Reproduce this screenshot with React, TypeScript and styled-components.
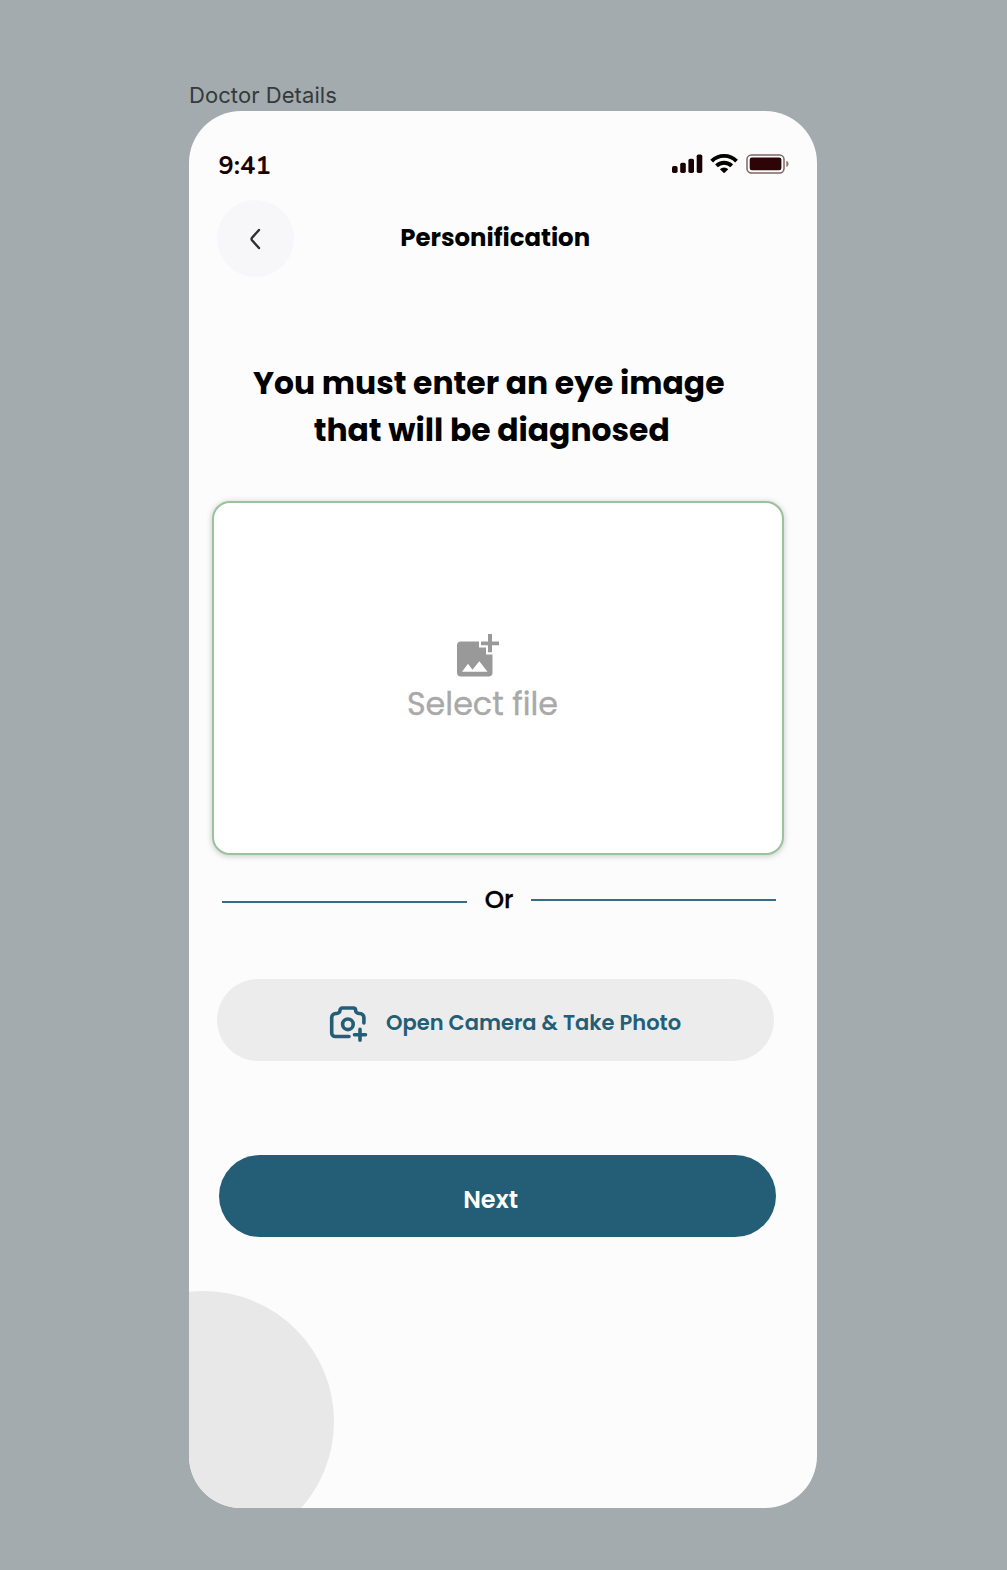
import React from "react";
import styled, { createGlobalStyle } from "styled-components";

const GlobalStyle = createGlobalStyle`
  *, *::before, *::after { box-sizing: border-box; }
  body { margin: 0; background: #a3abae; }
  button { border: 0; padding: 0; margin: 0; font: inherit; cursor: pointer; }
  h1, h2, p { margin: 0; }
`;

const Canvas = styled.main`
  width: 1007px;
  height: 1570px;
  padding: 81px 0 0 189px;
  overflow: hidden;
  background: #a3abae;
  font-family: Poppins, Inter, "Liberation Sans", sans-serif;
`;

const FrameLabel = styled.p`
  height: 30.4px;
  font: 400 22px/28px Inter, sans-serif;
  letter-spacing: 0.07px;
  color: #34393b;
`;

const Phone = styled.section`
  position: relative;
  display: flex;
  flex-direction: column;
  width: 628.4px;
  height: 1396.4px;
  border-radius: 52px;
  overflow: hidden;
  background: #fcfcfc;
`;

const StatusBar = styled.div`
  display: flex;
  justify-content: space-between;
  align-items: center;
  height: 30px;
  margin: 38.6px 27px 0 29.5px;
`;

const Time = styled.span`
  padding-top: 2px;
  font: 700 25.5px/30px Nunito, Lato, sans-serif;
  color: #1a0202;
`;

const StatusIcons = styled.svg`
  display: block;
  width: 118px;
  height: 22px;
  margin-top: -2px;
`;

const Header = styled.header`
  display: grid;
  grid-template-columns: 77px 1fr 77px;
  align-items: center;
  height: 77px;
  margin: 20.5px 44px 0 28px;
`;

const BackButton = styled.button`
  display: grid;
  place-items: center;
  width: 77px;
  height: 77px;
  padding-right: 2px;
  border-radius: 50%;
  background: #f7f7f9;
`;

const Title = styled.h1`
  justify-self: center;
  padding-bottom: 2px;
  font-size: 24.4px;
  line-height: 36px;
  font-weight: 700;
  white-space: nowrap;
  color: #000;
`;

const Prompt = styled.h2`
  display: flex;
  flex-direction: column;
  align-items: center;
  margin-top: 82.5px;
  padding-right: 29px;
  font-size: 31.4px;
  line-height: 47px;
  font-weight: 700;
  color: #000;
`;

const PromptLine = styled.span<{ $indent?: number }>`
  white-space: nowrap;
  padding-left: ${(p) => p.$indent ?? 0}px;
`;

const DropZone = styled.button`
  display: flex;
  flex-direction: column;
  align-items: center;
  width: 572px;
  height: 354px;
  margin: 47.4px 0 0 23px;
  padding: 130.5px 31px 0 0;
  border: 2px solid #9cc29c;
  border-radius: 18px;
  background: #fff;
  box-shadow: 0 1px 6px rgba(0, 0, 0, 0.22);
`;

const ImageIcon = styled.svg`
  display: block;
  margin-right: 10px;
`;

const DropLabel = styled.span`
  margin-top: 5.5px;
  font-size: 31.8px;
  line-height: 44px;
  -webkit-text-stroke: 0.35px #a9a9a9;
  color: #a9a9a9;
`;

const Divider = styled.div`
  display: flex;
  align-items: center;
  justify-content: space-between;
  width: 554px;
  height: 36px;
  margin: 26.6px 0 0 33px;
`;

const Rule = styled.span<{ $drop?: number }>`
  width: 244.5px;
  height: 2px;
  margin-top: ${(p) => p.$drop ?? 0}px;
  background: #3a6c86;
`;

const Or = styled.span`
  font-size: 24.6px;
  line-height: 36px;
  font-weight: 500;
  -webkit-text-stroke: 0.3px #000;
  color: #000;
`;

const PillButton = styled.button<{ $primary?: boolean }>`
  display: flex;
  flex-shrink: 0;
  align-items: center;
  justify-content: ${(p) => (p.$primary ? "center" : "flex-start")};
  width: 557px;
  height: 82px;
  margin: ${(p) => (p.$primary ? "94.3px 0 0 29.6px" : "61.1px 0 0 28px")};
  padding: ${(p) => (p.$primary ? "6px 13px 0 0" : "4px 0 0 112px")};
  border-radius: 41px;
  font-size: ${(p) => (p.$primary ? 24 : 21)}px;
  font-weight: 600;
  white-space: nowrap;
  color: ${(p) => (p.$primary ? "#fff" : "#235d76")};
  background: ${(p) => (p.$primary ? "#235d76" : "#ececec")};
`;

const CameraIcon = styled.svg`
  display: block;
  margin-top: 4px;
`;

const CameraLabel = styled.span`
  margin-left: 18px;
`;

const Blob = styled.div`
  position: absolute;
  left: -116.5px;
  top: 1180px;
  width: 261px;
  height: 261px;
  border-radius: 50%;
  background: #e8e8e8;
`;

const Status = () => (
  <StatusIcons viewBox="0 0 118 22" aria-label="Signal, Wi-Fi, battery">
    <g fill="#1a0202">
      <rect x="0" y="13" width="5.6" height="7" rx="1.7" />
      <rect x="8.2" y="9.7" width="5.6" height="10.3" rx="1.7" />
      <rect x="16.4" y="5.7" width="5.6" height="14.3" rx="1.7" />
      <rect x="24.7" y="1.5" width="5.6" height="18.5" rx="1.7" />
    </g>
    <g fill="none" stroke="#050000" strokeWidth="3.9">
      <path d="M39.7 8.1a17.4 17.4 0 0 1 24.8 0" />
      <path d="M44.5 12.9a10.8 10.8 0 0 1 15.2 0" />
    </g>
    <path d="M47.9 16.2a6 6 0 0 1 8.4 0l-4.2 4.1Z" fill="#050000" />
    <rect x="75" y="1.9" width="37" height="18" rx="4.4" fill="none" stroke="#7c6667" strokeWidth="1.5" />
    <rect x="77.7" y="4.5" width="31.7" height="12.8" rx="2.2" fill="#2d0507" />
    <path d="M114.3 7.8c3 1 3 5.2 0 6.2Z" fill="#8d7778" />
  </StatusIcons>
);

export default function App() {
  return (
    <>
      <GlobalStyle />
      <Canvas>
        <FrameLabel>Doctor Details</FrameLabel>
        <Phone>
          <Blob />
          <StatusBar>
            <Time>9:41</Time>
            <Status />
          </StatusBar>
          <Header>
            <BackButton aria-label="Back">
              <svg width="12" height="22" viewBox="0 0 12 22" fill="none" stroke="#303033" strokeWidth="2.4" strokeLinecap="round" strokeLinejoin="round">
                <path d="M10 2 3 9.800q-.9 1.200 0 2.400l7 7.800" />
              </svg>
            </BackButton>
            <Title>Personification</Title>
          </Header>
          <Prompt>
            <PromptLine>You must enter an eye image</PromptLine>
            <PromptLine $indent={6}>that will be diagnosed</PromptLine>
          </Prompt>
          <DropZone>
            <ImageIcon width="42" height="43" viewBox="0 0 42 43">
              <path fill="#999" fillRule="evenodd" d="M4 7.500H22V13.500H29V20.500H35.500V38.500a4 4 0 0 1-4 4H4a4 4 0 0 1-4-4v-27a4 4 0 0 1 4-4ZM5 37.700H30.500L22.300 27.200 15.500 35.700 11 29.800Z" />
              <path fill="#999" d="M31 0h4v7.500h7v3.700h-7v7h-4v-7h-7V7.500h7Z" />
            </ImageIcon>
            <DropLabel>Select file</DropLabel>
          </DropZone>
          <Divider>
            <Rule $drop={4} />
            <Or>Or</Or>
            <Rule />
          </Divider>
          <PillButton>
            <CameraIcon width="39" height="38" viewBox="0 0 39 38" fill="none" stroke="#235d76" strokeWidth="3.6" strokeLinecap="round" strokeLinejoin="round">
              <path d="M20 31.500H6.200a3.500 3.500 0 0 1-3.500-3.500V12.500a4 4 0 0 1 4-4h1.100a3.200 3.200 0 0 0 3.200-3.200 2.300 2.300 0 0 1 2.300-2.300h11a2.300 2.300 0 0 1 2.300 2.300 3.200 3.200 0 0 0 3.200 3.200h1.100a4 4 0 0 1 4 4V18" />
              <circle cx="18.900" cy="19.300" r="5.300" />
              <path d="M25.500 29.800h11M31 24.300v11" />
            </CameraIcon>
            <CameraLabel>Open Camera &amp; Take Photo</CameraLabel>
          </PillButton>
          <PillButton $primary>Next</PillButton>
        </Phone>
      </Canvas>
    </>
  );
}
